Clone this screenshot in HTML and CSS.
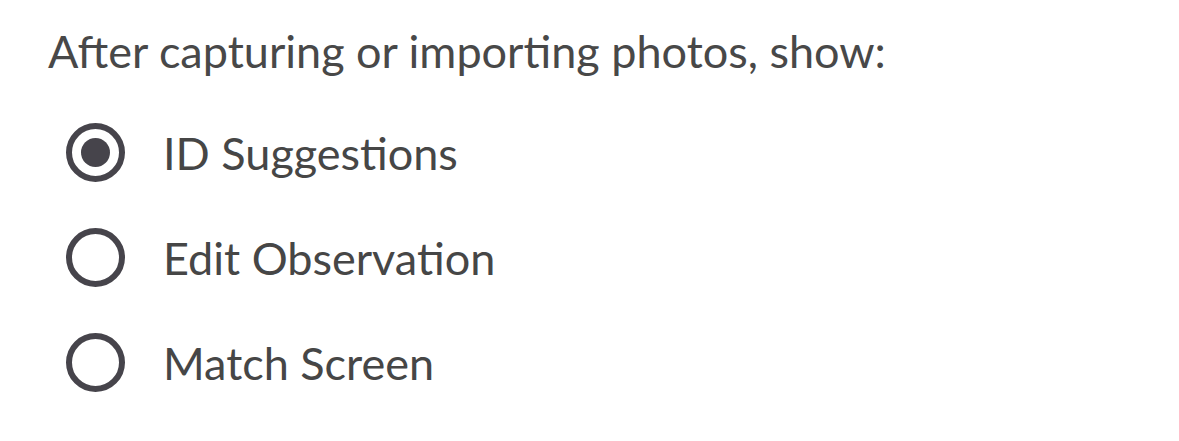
FILE: index.html
```html
<!DOCTYPE html>
<html>
<head>
<meta charset="utf-8">
<link rel="stylesheet" href="styles.css">
</head>
<body>
<div class="panel">
  <div class="title">After capturing or importing photos, show:</div>
  <div class="options">
    <div class="option">
      <span class="radio checked"><span class="dot"></span></span>
      <span class="label">ID Suggestions</span>
    </div>
    <div class="option">
      <span class="radio"></span>
      <span class="label">Edit Observation</span>
    </div>
    <div class="option">
      <span class="radio"></span>
      <span class="label">Match Screen</span>
    </div>
  </div>
</div>
</body>
</html>
```
FILE: styles.css
```css
html, body {
  margin: 0;
  padding: 0;
  background: #ffffff;
}
body {
  font-family: Lato, "Noto Sans", sans-serif;
  color: #464646;
}
.panel {
  padding: 25px 0 0 48px;
}
.title {
  font-size: 45px;
  line-height: 52px;
  color: #484848;
}
.options {
  display: flex;
  flex-direction: column;
  gap: 46px;
  margin-top: 46px;
  padding-left: 18px;
}
.option {
  display: flex;
  align-items: center;
  gap: 38px;
  height: 59px;
}
.radio {
  box-sizing: border-box;
  width: 59px;
  height: 59px;
  border: 6.5px solid #46444b;
  border-radius: 50%;
  display: flex;
  align-items: center;
  justify-content: center;
  flex: none;
}
.dot {
  width: 29px;
  height: 29px;
  border-radius: 50%;
  background: #46444b;
}
.label {
  font-size: 45px;
  line-height: 59px;
  padding-top: 2px;
}
```
